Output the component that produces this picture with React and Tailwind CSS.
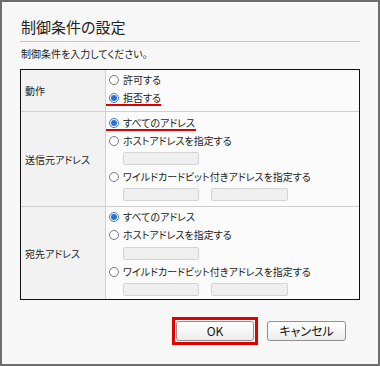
import React from 'react';

const jp = "font-['Noto_Sans_CJK_JP','Noto_Sans',sans-serif] [font-feature-settings:'palt']";

function Radio({ label, checked, underline }) {
    return (
        <div className='relative flex items-center h-[18px] pl-[3px]'>
            {checked ? (
                <span className='w-[10px] h-[10px] rounded-full border border-[#3a78d4] bg-white flex items-center justify-center shrink-0'>
                    <span className='w-[6px] h-[6px] rounded-full bg-[#2b6fd4]' />
                </span>
            ) : (
                <span className='w-[10px] h-[10px] rounded-full border border-[#7a7a7a] bg-white shrink-0' />
            )}
            <span className='ml-[4px] text-[10px] leading-[14px] text-[#222]'>{label}</span>
            {underline && (
                <span className={`absolute left-[0px] bottom-[1px] h-[2px] bg-[#e00000] ${underline}`} />
            )}
        </div>
    );
}

function Field({ wide }) {
    return (
        <div className={`h-[13px] ${wide ? 'w-[77px]' : 'w-[76px]'} bg-[#efefef] border border-[#d4d4d4] rounded-[2px]`} />
    );
}

function AddressGroup({ underline, first }) {
    return (
        <>
            <Radio label='すべてのアドレス' checked underline={underline ? 'w-[90px]' : null} />
            <Radio label='ホストアドレスを指定する' />
            <div className={`${first ? 'mt-[2px]' : 'mt-[3px]'} pl-[17px]`}>
                <Field />
            </div>
            <div className='mt-[3px]'>
                <Radio label='ワイルドカードビット付きアドレスを指定する' />
            </div>
            <div className='mt-[2px] pl-[17px] flex gap-[12px]'>
                <Field />
                <Field wide />
            </div>
        </>
    );
}

function Row({ label, children, className, last }) {
    return (
        <div className={`flex ${last ? '' : 'border-b border-[#d0d0d0]'}`}>
            <div className='w-[85px] shrink-0 bg-[#f2f2f2] border-r border-[#d0d0d0] flex items-center pl-[4px]'>
                <span className='text-[10px] text-[#222]'>{label}</span>
            </div>
            <div className={`flex-1 bg-[#fbfbfb] ${className}`}>
                {children}
            </div>
        </div>
    );
}

export default function App() {
    return (
        <div className={`w-[380px] h-[366px] border-2 border-[#6e6e6e] bg-[#f7f7f7] ${jp}`}>
            <div className='px-[18px]'>
                {/* Header */}
                <div className='pt-[14px] pb-[3px] border-b border-[#c4c4c4]'>
                    <h1 className='text-[15px] leading-[22px] font-normal text-[#222] pl-[1px]'>制御条件の設定</h1>
                </div>
                <p className='mt-[5px] text-[10px] leading-[14px] text-[#222] pl-[1px]'>制御条件を入力してください。</p>

                {/* Conditions table */}
                <div className='mt-[8px] border border-[#111]'>
                    <Row label='動作' className='pt-[1px] pb-[4px]'>
                        <Radio label='許可する' />
                        <Radio label='拒否する' checked underline='w-[55px]' />
                    </Row>
                    <Row label='送信元アドレス' className='pt-[2px] pb-[5px]'>
                        <AddressGroup underline first />
                    </Row>
                    <Row label='宛先アドレス' className='pt-[1px] pb-[3px]' last>
                        <AddressGroup />
                    </Row>
                </div>

                {/* Buttons */}
                <div className='mt-[17px] flex justify-end items-center gap-[9px] pr-[14px]'>
                    <div className='border-[3px] border-[#e00000] p-[1px]'>
                        <button className='w-[78px] h-[20px] rounded-[3px] border border-[#8f8f8f] bg-gradient-to-b from-white to-[#ececec] text-[12px] font-normal text-[#111] flex items-center justify-center'>
                            OK
                        </button>
                    </div>
                    <button className='w-[79px] h-[20px] rounded-[3px] border border-[#8f8f8f] bg-gradient-to-b from-white to-[#ececec] text-[12px] font-normal text-[#111] flex items-center justify-center'>
                        キャンセル
                    </button>
                </div>
            </div>
        </div>
    );
}
